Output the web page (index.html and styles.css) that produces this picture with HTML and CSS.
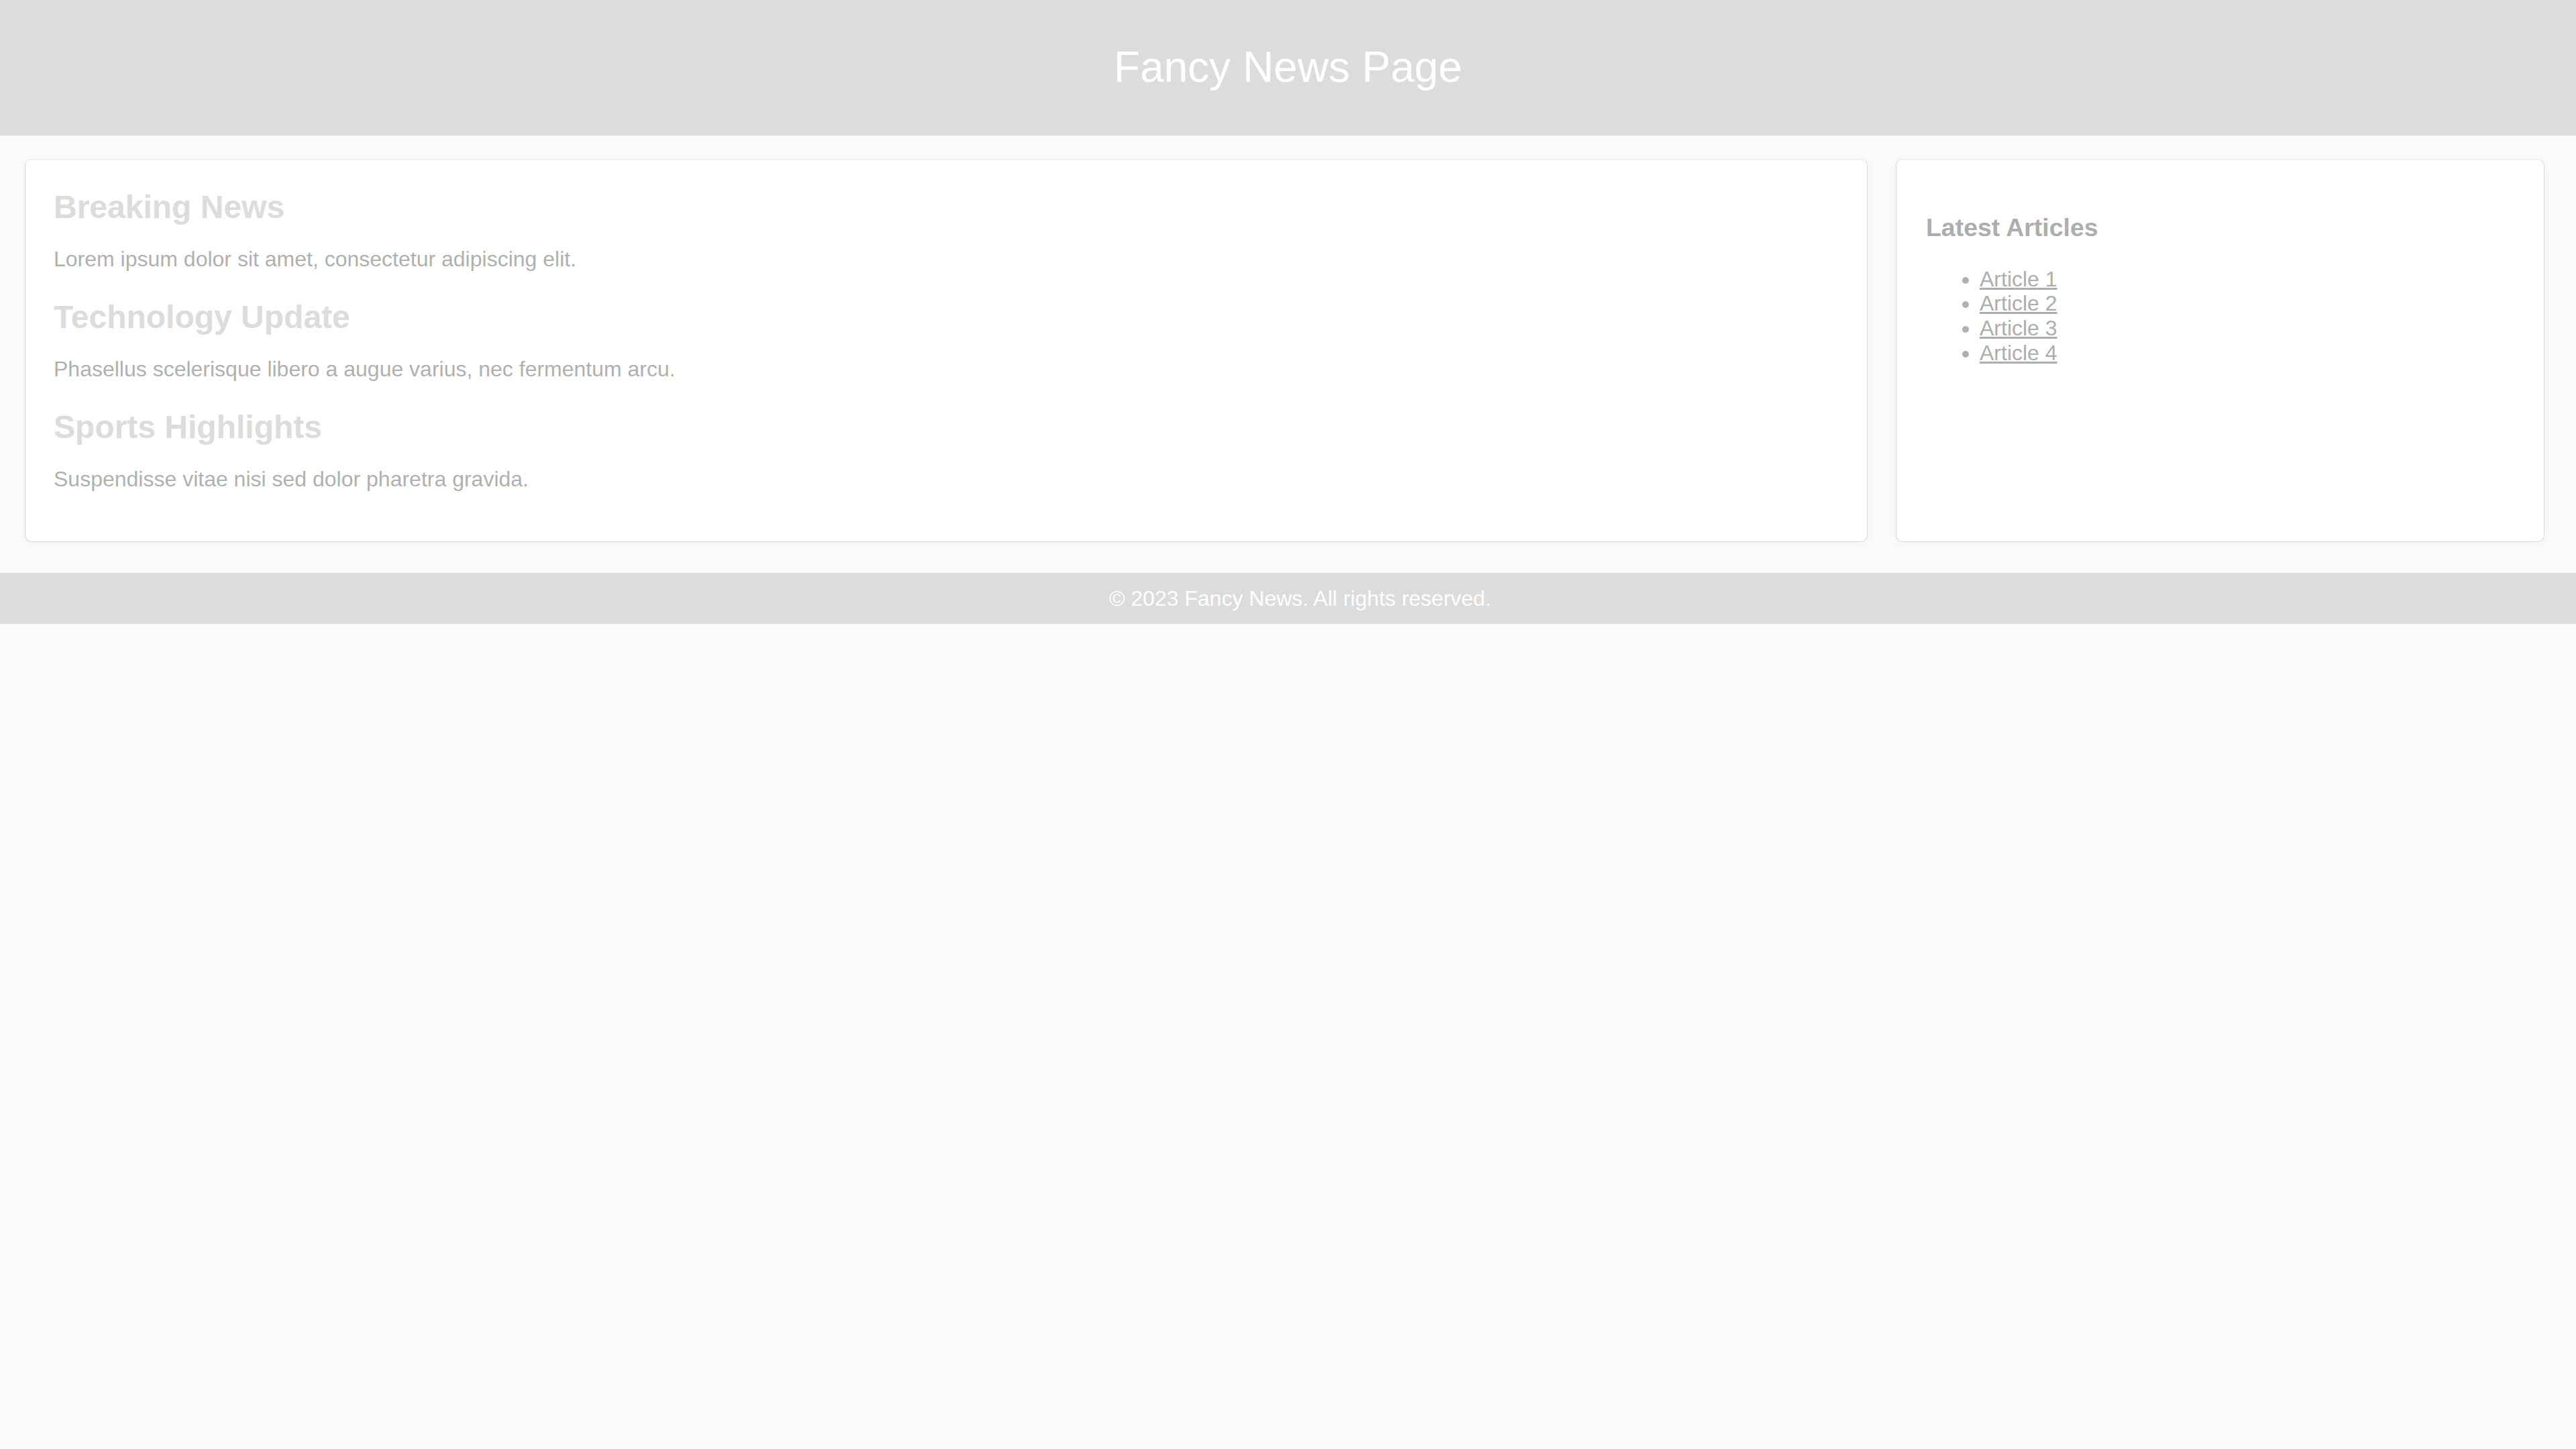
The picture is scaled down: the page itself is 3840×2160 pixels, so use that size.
FILE: index.html
```html
<!DOCTYPE html>
<html lang="en">
<head>
<meta charset="utf-8">
<title>Fancy News Page</title>
<link rel="stylesheet" href="styles.css">
</head>
<body>
<header class="site-header">
  <h1 class="site-title">Fancy News Page</h1>
</header>
<div class="layout">
  <main class="card main-card">
    <article class="story">
      <h2 class="story-title">Breaking News</h2>
      <p class="story-text">Lorem ipsum dolor sit amet, consectetur adipiscing elit.</p>
    </article>
    <article class="story">
      <h2 class="story-title">Technology Update</h2>
      <p class="story-text">Phasellus scelerisque libero a augue varius, nec fermentum arcu.</p>
    </article>
    <article class="story">
      <h2 class="story-title">Sports Highlights</h2>
      <p class="story-text">Suspendisse vitae nisi sed dolor pharetra gravida.</p>
    </article>
  </main>
  <aside class="card side-card">
    <h3 class="side-title">Latest Articles</h3>
    <ul class="side-list">
      <li><a href="#" class="side-link">Article 1</a></li>
      <li><a href="#" class="side-link">Article 2</a></li>
      <li><a href="#" class="side-link">Article 3</a></li>
      <li><a href="#" class="side-link">Article 4</a></li>
    </ul>
  </aside>
</div>
<footer class="site-footer">
  <p class="footer-text">© 2023 Fancy News. All rights reserved.</p>
</footer>
</body>
</html>
```
FILE: styles.css
```css
html, body {
  margin: 0;
  padding: 0;
}

body {
  background: #fafafa;
  font-family: "Liberation Sans", Arial, sans-serif;
  font-size: 32px;
  line-height: 1.15;
}

.site-header {
  background: #dcdcdc;
  padding: 64px;
  text-align: center;
}

.site-title {
  margin: 0;
  font-size: 64px;
  font-weight: normal;
  color: #ffffff;
  line-height: 1.15;
}

.layout {
  display: grid;
  grid-template-columns: minmax(0, 1fr) 967px;
  gap: 42px;
  padding: 35px 47px 46px 37px;
}

.card {
  background: #ffffff;
  border: 1px solid #d8d8d8;
  border-top-color: #e6e6e6;
  border-radius: 10px;
  box-shadow: 0 2px 16px rgba(0, 0, 0, 0.035);
  padding: 43px 42px 37px;
}

.side-card {
  padding-left: 44px;
}

.story {
  margin-bottom: 40px;
}

.story:last-child {
  margin-bottom: 37px;
}

.story-title {
  margin: 0;
  font-size: 48px;
  font-weight: bold;
  color: #dcdcdc;
  line-height: 1.15;
}

.story-text {
  margin: 32px 0 0;
  font-size: 32px;
  color: #b0b0b0;
}

.side-title {
  margin: 37px 0;
  font-size: 37.44px;
  font-weight: bold;
  color: #adadad;
  line-height: 1.15;
}

.side-list {
  margin: 0;
  padding-left: 80px;
  color: #b0b0b0;
}

.side-link {
  color: #adadad;
  text-decoration: underline;
}

.site-footer {
  background: #dcdcdc;
  padding: 20px 20px 20px 56px;
  text-align: center;
}

.footer-text {
  margin: 0;
  color: #ffffff;
  font-size: 32px;
}
```
